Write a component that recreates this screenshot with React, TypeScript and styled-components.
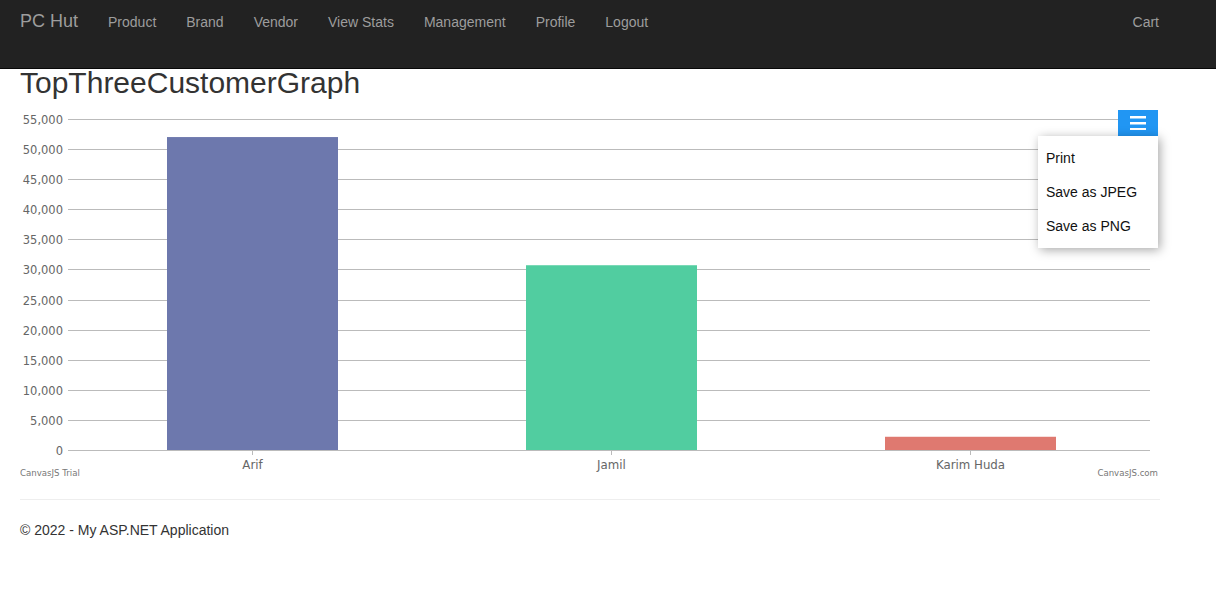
import React from "react";
import styled, { createGlobalStyle } from "styled-components";

const GlobalStyle = createGlobalStyle`
  html, body { margin: 0; padding: 0; background: #fff; }
  body {
    font-family: "Liberation Sans", Arial, Helvetica, sans-serif;
    font-size: 14px;
    line-height: 1.42857;
    color: #333;
  }
  * { box-sizing: border-box; }
`;

const NavBar = styled.nav`
  position: fixed;
  top: 0;
  left: 0;
  right: 0;
  height: 69px;
  background: #222;
  border-bottom: 1px solid #080808;
  display: flex;
  align-items: flex-start;
  padding: 0 42px 0 5px;
  z-index: 10;
`;

const Brand = styled.a`
  display: block;
  padding: 11px 15px 0;
  font-size: 18px;
  line-height: 20px;
  color: #9d9d9d;
  text-decoration: none;
`;

const NavList = styled.ul<{ $right?: boolean }>`
  list-style: none;
  margin: 0;
  margin-left: ${(p) => (p.$right ? "auto" : "0")};
  padding: 0;
  display: flex;
`;

const NavLink = styled.a`
  display: block;
  padding: 12px 15px 18px;
  font-size: 14px;
  line-height: 20px;
  color: #9d9d9d;
  text-decoration: none;
`;

const Main = styled.main`
  padding: 66px 0 0 20px;
  width: 1160px;
`;

const Title = styled.h2`
  margin: 0 0 10px;
  font-size: 30px;
  line-height: 1.1;
  font-weight: 500;
  color: #333;
`;

const ChartBox = styled.div`
  position: relative;
  width: 1140px;
  height: 370px;
`;

const MenuButton = styled.div`
  position: absolute;
  top: 1px;
  right: 2px;
  width: 40px;
  height: 26px;
  background: #2196f3;
  display: flex;
  align-items: flex-start;
  justify-content: center;
  padding-top: 6px;
`;

const Menu = styled.div`
  position: absolute;
  top: 27px;
  right: 2px;
  width: 120px;
  height: 112px;
  background: #fff;
  box-shadow: 2px 2px 10px rgba(0, 0, 0, 0.35);
  padding: 5px 0 5px;
`;

const MenuItem = styled.div`
  padding: 7px 8px;
  font-size: 14px;
  line-height: 20px;
  color: #111;
  white-space: nowrap;
`;

const Rule = styled.hr`
  margin: 20px 0;
  border: 0;
  border-top: 1px solid #eee;
  width: 1140px;
`;

const Footer = styled.footer`
  margin: 0 0 10px;
  font-size: 14px;
  line-height: 20px;
  color: #333;
`;

const navItems = ["Product", "Brand", "Vendor", "View Stats", "Management", "Profile", "Logout"];

const data = [
  { label: "Arif", value: 52000, x: 147, color: "#6D78AD" },
  { label: "Jamil", value: 30700, x: 506, color: "#51CDA0" },
  { label: "Karim Huda", value: 2200, x: 865, color: "#DF7970" },
];

const AXIS_TOP = 10;
const AXIS_BOTTOM = 341;
const MAX = 55000;
const BAR_W = 171;
const FONT = '"DejaVu Sans", Verdana, sans-serif';

function Chart() {
  const ticks = Array.from({ length: 12 }, (_, i) => i * 5000);
  const yOf = (v: number) => AXIS_BOTTOM - (v / MAX) * (AXIS_BOTTOM - AXIS_TOP);
  return (
    <svg width={1140} height={370} viewBox="0 0 1140 370" style={{ display: "block" }}>
      {ticks.map((t) => {
        const y = Math.round(yOf(t)) + 0.5;
        return (
          <g key={t}>
            <line x1={48} x2={1130} y1={y} y2={y} stroke="#BBBBBB" strokeWidth={1} />
            <text x={43} y={y + 4} textAnchor="end" fontFamily={FONT} fontSize={11.5} fill="#666">
              {t.toLocaleString("en-US")}
            </text>
          </g>
        );
      })}
      {data.map((d) => {
        const top = yOf(d.value);
        const cx = d.x + BAR_W / 2;
        return (
          <g key={d.label}>
            <rect x={d.x} y={top} width={BAR_W} height={AXIS_BOTTOM - top} fill={d.color} />
            <line x1={cx} x2={cx} y1={AXIS_BOTTOM + 0.5} y2={AXIS_BOTTOM + 5} stroke="#BBBBBB" />
            <text x={cx} y={360} textAnchor="middle" fontFamily={FONT} fontSize={11.8} fill="#666">
              {d.label}
            </text>
          </g>
        );
      })}
      <text x={0} y={366.5} fontFamily={FONT} fontSize={8.6} fill="#777">
        CanvasJS Trial
      </text>
      <text x={1138} y={367} textAnchor="end" fontFamily={FONT} fontSize={8.6} fill="#777">
        CanvasJS.com
      </text>
    </svg>
  );
}

export default function App() {
  return (
    <>
      <GlobalStyle />
      <NavBar>
        <Brand href="#">PC Hut</Brand>
        <NavList>
          {navItems.map((n) => (
            <li key={n}>
              <NavLink href="#">{n}</NavLink>
            </li>
          ))}
        </NavList>
        <NavList $right>
          <li>
            <NavLink href="#">Cart</NavLink>
          </li>
        </NavList>
      </NavBar>
      <Main>
        <Title>TopThreeCustomerGraph</Title>
        <ChartBox>
          <Chart />
          <MenuButton>
            <svg width={16} height={14} viewBox="0 0 16 14">
              <rect x={0} y={0} width={16} height={2.5} fill="#fff" />
              <rect x={0} y={6} width={16} height={2.5} fill="#fff" />
              <rect x={0} y={12} width={16} height={2.5} fill="#fff" />
            </svg>
          </MenuButton>
          <Menu>
            <MenuItem>Print</MenuItem>
            <MenuItem>Save as JPEG</MenuItem>
            <MenuItem>Save as PNG</MenuItem>
          </Menu>
        </ChartBox>
        <Rule />
        <Footer>© 2022 - My ASP.NET Application</Footer>
      </Main>
    </>
  );
}
